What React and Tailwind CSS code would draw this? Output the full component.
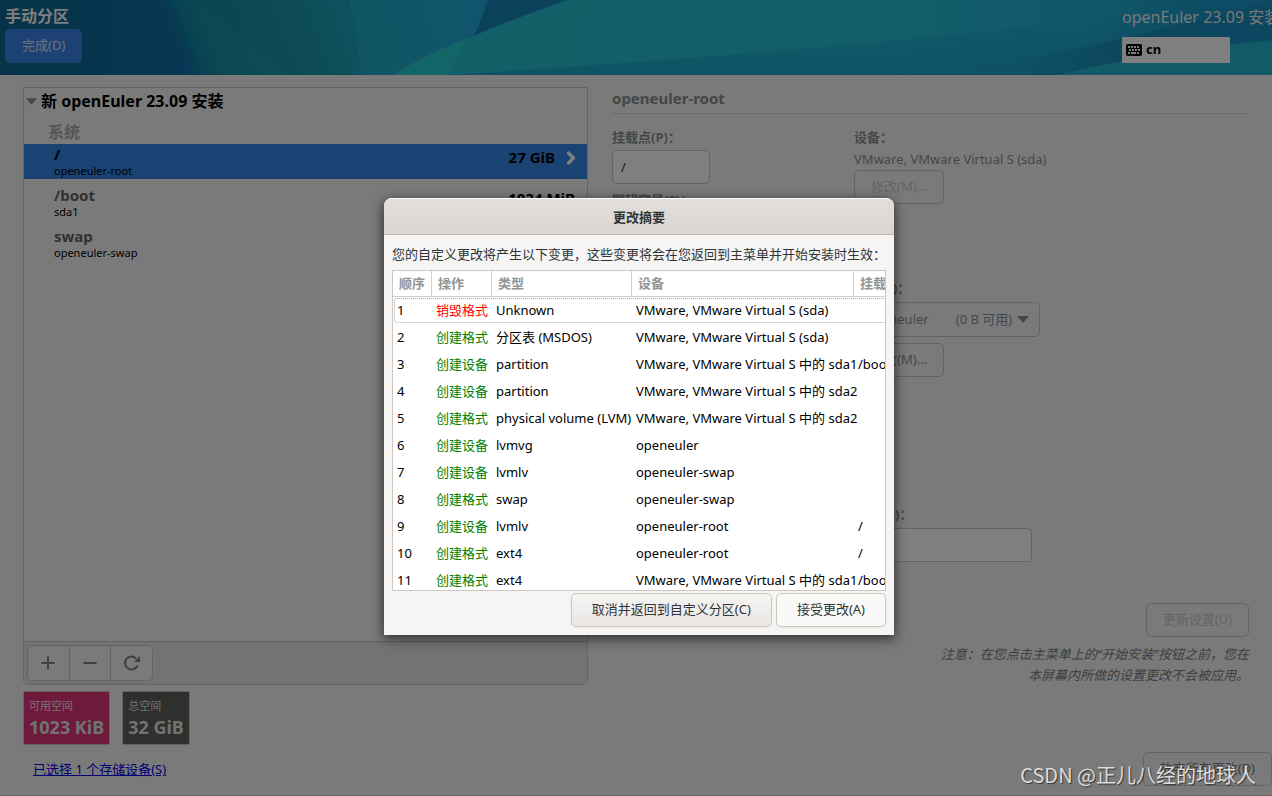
import { ChevronRight, Minus, Plus, RotateCw } from 'lucide-react';

const ACTIONS = [
  { id: 1, action: '销毁格式', destroy: true, type: 'Unknown', device: 'VMware, VMware Virtual S (sda)', mount: '' },
  { id: 2, action: '创建格式', type: '分区表 (MSDOS)', device: 'VMware, VMware Virtual S (sda)', mount: '' },
  { id: 3, action: '创建设备', type: 'partition', device: 'VMware, VMware Virtual S 中的 sda1', mount: '/boot' },
  { id: 4, action: '创建设备', type: 'partition', device: 'VMware, VMware Virtual S 中的 sda2', mount: '' },
  { id: 5, action: '创建格式', type: 'physical volume (LVM)', device: 'VMware, VMware Virtual S 中的 sda2', mount: '' },
  { id: 6, action: '创建设备', type: 'lvmvg', device: 'openeuler', mount: '' },
  { id: 7, action: '创建设备', type: 'lvmlv', device: 'openeuler-swap', mount: '' },
  { id: 8, action: '创建格式', type: 'swap', device: 'openeuler-swap', mount: '' },
  { id: 9, action: '创建设备', type: 'lvmlv', device: 'openeuler-root', mount: '/' },
  { id: 10, action: '创建格式', type: 'ext4', device: 'openeuler-root', mount: '/' },
  { id: 11, action: '创建格式', type: 'ext4', device: 'VMware, VMware Virtual S 中的 sda1', mount: '/boot' },
];

const MOUNTS = [
  { path: '/', name: 'openeuler-root', size: '27 GiB', selected: true },
  { path: '/boot', name: 'sda1', size: '1024 MiB' },
  { path: 'swap', name: 'openeuler-swap', size: '3 GiB' },
];

const Banner = () => (
  <svg className="absolute inset-0 h-full w-full" viewBox="0 0 1272 75" preserveAspectRatio="none" aria-hidden="true">
    <defs>
      {/* slanted, the teal starts further right at the bottom */}
      <linearGradient id="base" x1="0" x2="560" y1="75" y2="-120" gradientUnits="userSpaceOnUse">
        <stop offset="0" stopColor="#086296" />
        <stop offset="0.22" stopColor="#0a6a9a" />
        <stop offset="0.36" stopColor="#1690a8" />
        <stop offset="0.46" stopColor="#1a98b0" />
        <stop offset="0.58" stopColor="#20acc4" />
        <stop offset="0.8" stopColor="#20aad8" />
        <stop offset="1" stopColor="#20aad8" />
      </linearGradient>
      <linearGradient id="dark" x1="0" x2="205" y1="0" y2="0" gradientUnits="userSpaceOnUse">
        <stop offset="0" stopColor="#086690" />
        <stop offset="0.6" stopColor="#0a6a9c" />
        <stop offset="1" stopColor="#0a6cac" />
      </linearGradient>
      <linearGradient id="wave" x1="440" x2="1200" y1="0" y2="75" gradientUnits="userSpaceOnUse">
        <stop offset="0" stopColor="#24c0d0" />
        <stop offset="0.6" stopColor="#24bcd4" />
        <stop offset="0.85" stopColor="#22b0d4" />
        <stop offset="1" stopColor="#1a98c8" />
      </linearGradient>
      <linearGradient id="low" x1="0" x2="0" y1="0" y2="1">
        <stop offset="0" stopColor="#1890c4" stopOpacity="0" />
        <stop offset="1" stopColor="#1890c4" stopOpacity="0.5" />
      </linearGradient>
      <linearGradient id="fold" x1="1000" x2="1250" y1="0" y2="0" gradientUnits="userSpaceOnUse">
        <stop offset="0" stopColor="#1484b8" stopOpacity="0" />
        <stop offset="0.6" stopColor="#1484b8" stopOpacity="0.8" />
        <stop offset="1" stopColor="#1484b8" stopOpacity="0.4" />
      </linearGradient>
      <filter id="soft" x="-20%" y="-50%" width="140%" height="200%">
        <feGaussianBlur stdDeviation="8" />
      </filter>
    </defs>
    <rect width="1272" height="75" fill="url(#base)" />
    <path d="M-30 -30 L152 -30 Q180 30 212 110 L-30 110 Z" fill="url(#dark)" filter="url(#soft)" />
    <path d="M190 0 Q246 34 286 75 L362 75 L350 0 Z" fill="#147c98" opacity="0.2" />
    <path d="M488 0 L566 0 Q520 16 474 36 Q482 18 488 0 Z" fill="#1484b8" />
    <path d="M392 75 Q480 28 572 0 L1272 0 L1272 75 Z" fill="url(#wave)" />
    <path d="M392 75 Q425 55 466 38 Q458 56 446 75 Z" fill="#2ad4d0" opacity="0.6" />
    <path d="M446 75 Q860 50 1272 0 L1272 75 Z" fill="url(#low)" />
    <path d="M940 75 Q1120 44 1272 0 L1272 75 Z" fill="url(#fold)" />
    <path d="M1058 75 Q1150 52 1272 40 L1272 75 Z" fill="#22b4cc" />
  </svg>
);

const KeyboardIcon = () => (
  <svg width="16" height="12" viewBox="0 0 16 12" aria-hidden="true">
    <rect width="16" height="12" rx="2" fill="#000" />
    <path d="M2 3h2M5 3h2M8 3h2M11 3h2M3 6h2M6 6h2M9 6h2M12 6h2M2 9h2M5 9h5M11 9h2" stroke="#fff" strokeWidth="2" />
  </svg>
);

const Triangle = ({ className }) => (
  <svg className={className} width="12" height="7" viewBox="0 0 12 7" aria-hidden="true">
    <path d="M0 0h12L6 7z" fill="currentColor" />
  </svg>
);

const RefreshIcon = () => (
  <svg width="18" height="18" viewBox="0 0 18 18" fill="none" aria-hidden="true">
    <path d="M14.5 11.5A6.5 6.5 0 1 1 13.5 4.8" stroke="currentColor" strokeWidth="2" />
    <path d="M17 2v6h-6l2.5-2L15 4z" fill="currentColor" />
  </svg>
);

const fieldClass = 'block h-[34px] rounded-[5px] border border-[#cdc7c2] bg-white px-2 text-[13px] text-[#2e3436]';
const buttonClass = 'h-[34px] rounded-[5px] border border-[#cdc7c2] px-4 whitespace-nowrap';

const Header = () => (
  <header className="relative flex h-[75px] shrink-0 justify-between overflow-hidden">
    <Banner />
    <div className="relative pt-1 pl-[5px]">
      <h1 className="text-base leading-[25px] font-bold text-white">手动分区</h1>
      <button type="button" className="h-[34px] rounded-[5px] bg-[#3c82e6] px-[17px] text-[#d8e6fa]">
        完成(D)
      </button>
    </div>
    <div className="relative w-[150px] pt-1">
      <div className="text-base leading-[27px] whitespace-nowrap text-[#f0f0f0]">openEuler 23.09 安装</div>
      <button type="button" className="mt-1.5 flex h-[26px] w-[108px] items-center gap-1 bg-white px-1 font-bold text-black">
        <KeyboardIcon />
        cn
      </button>
    </div>
  </header>
);

const MountTree = () => (
  <section className="flex min-h-0 flex-1 flex-col rounded-b-[5px] border border-[#cdc7c2]">
    <div className="flex-1 overflow-hidden">
      <div className="flex h-[26px] items-center gap-1 pl-[2px]">
        <Triangle className="w-[11px] text-[#8b8e8f]" />
        <h2 className="text-base font-bold text-black">新 openEuler 23.09 安装</h2>
      </div>
      <h3 className="flex h-[30px] items-center pt-[5px] pl-6 text-base font-bold text-[#a9abab]">系统</h3>
      <ul>
        {MOUNTS.map((m) => (
          <li
            key={m.path}
            className={
              m.selected
                ? 'mb-[3px] flex h-[35px] items-center bg-[#3584e4] pr-1.5 pl-[30px] text-black'
                : 'flex h-[41px] items-center pr-3 pl-[30px] text-[#606465]'
            }
          >
            <div className="flex-1">
              <div className="text-[15px] leading-[18px] font-bold">{m.path}</div>
              <div className="text-[11px] leading-4 text-black">{m.name}</div>
            </div>
            <div className="pb-2 text-[15px] font-bold text-black">{m.size}</div>
            {m.selected && <ChevronRight className="mb-2 ml-1.5 h-5 w-5 text-white" strokeWidth={4} />}
          </li>
        ))}
      </ul>
    </div>
    <div className="border-t border-[#cdc7c2] bg-[#ebe7e4] px-[3px] py-[3px]">
      <div className="flex h-9 w-[126px] divide-x divide-[#cdc7c2] rounded-[5px] border border-[#cdc7c2] bg-[#f6f5f4] text-[#7c7f80]">
        <button type="button" aria-label="添加" className="flex flex-1 items-center justify-center">
          <Plus className="h-5 w-5" strokeWidth={2.4} />
        </button>
        <button type="button" aria-label="移除" className="flex flex-1 items-center justify-center">
          <Minus className="h-5 w-5" strokeWidth={2.4} />
        </button>
        <button type="button" aria-label="刷新" className="flex flex-1 items-center justify-center">
          <RefreshIcon />
        </button>
      </div>
    </div>
  </section>
);

const DeviceDetails = () => (
  <section className="flex min-h-0 flex-col text-[#8b8e8f]">
    <h2 className="h-[27px] border-b border-[#dcd8d5] text-[15px] leading-[22px] font-bold">openeuler-root</h2>
    <div className="grid grid-cols-[38fr_62fr] pt-[13px]">
      <div>
        <label htmlFor="mount" className="block h-[23px] leading-[21px] font-bold">挂载点(P)：</label>
        <input id="mount" defaultValue="/" className={`${fieldClass} w-[98px]`} />
        <label htmlFor="capacity" className="mt-[7px] block h-6 font-bold">期望容量(S)：</label>
        <input id="capacity" defaultValue="27 GiB" className={`${fieldClass} w-[98px]`} />
      </div>
      <div>
        <div className="h-5 leading-[21px] font-bold">设备：</div>
        <p className="h-[23px] leading-6">VMware, VMware Virtual S (sda)</p>
        <button type="button" disabled className={`${buttonClass} text-[#c8c8c6]`}>修改(M)...</button>

        <label htmlFor="group" className="mt-[75px] block h-[23px] font-bold">卷组(V)：</label>
        <div className="relative w-[186px]">
          <select
            id="group"
            className="h-[35px] w-full appearance-none rounded-[5px] border border-[#cdc7c2] bg-[#f6f5f4] px-[11px]"
          >
            <option>openeuler{'\u00a0'.repeat(8)}(0 B 可用)</option>
          </select>
          <Triangle className="pointer-events-none absolute top-[14px] right-[11px]" />
        </div>
        <button type="button" className={`${buttonClass} mt-1.5`}>修改(M)...</button>

        <label htmlFor="name" className="mt-[128px] block h-[23px] font-bold">名称(N)：</label>
        <input id="name" defaultValue="root" className={`${fieldClass} w-[178px]`} />
      </div>
    </div>
    <div className="mt-[41px] flex flex-col items-end">
      <button type="button" disabled className={`${buttonClass} text-[#c8c8c6]`}>更新设置(U)</button>
      <p className="mt-[7px] w-[320px] text-right leading-[21px] text-[#7c7f80] italic">
        注意：在您点击主菜单上的“开始安装”按钮之前，您在本屏幕内所做的设置更改不会被应用。
      </p>
    </div>
  </section>
);

const StorageBox = ({ label, value, className }) => (
  <div className={`h-[54px] border border-[#cdc7c2] px-[5px] pt-1 text-[#e4e4e4] ${className}`}>
    <div className="text-[11px] leading-5">{label}</div>
    <div className="text-[18px] leading-[22px] font-bold">{value}</div>
  </div>
);

const SummaryDialog = () => (
  <div
    role="dialog"
    aria-labelledby="summary-title"
    className="w-[510px] overflow-hidden rounded-t-lg bg-[#f6f5f4] text-[#2e3436] shadow-[0_3px_12px_1px_rgba(0,0,0,0.6)]"
  >
    <h2
      id="summary-title"
      className="h-[37px] border-t border-b border-t-white border-b-[#bfb8b1] bg-linear-to-b from-[#e1dedb] to-[#dad6d2] text-center leading-9 font-bold"
    >
      更改摘要
    </h2>
    <div className="px-2 pb-2">
      <p className="pt-2 pb-1 leading-[23px] whitespace-nowrap">
        您的自定义更改将产生以下变更，这些变更将会在您返回到主菜单并开始安装时生效：
      </p>
      <div className="h-[321px] overflow-hidden border border-[#cdc7c2] bg-white">
        <table className="w-[530px] table-fixed border-separate border-spacing-0 text-black">
          <thead>
            <tr className="h-[26px] text-left text-[#929595] [&>th]:border-r [&>th]:border-b [&>th]:border-[#d5d0cc] [&>th]:px-1.5 [&>th]:pt-0.5 [&>th]:pb-0 [&>th]:font-bold">
              <th className="w-[39px]">顺序</th>
              <th className="w-[60px]">操作</th>
              <th className="w-[140px]">类型</th>
              <th className="w-[222px]">设备</th>
              <th>挂载点</th>
            </tr>
          </thead>
          <tbody>
            {ACTIONS.map((a) => (
              <tr
                key={a.id}
                className="h-[27px] whitespace-nowrap first:rounded-sm first:outline first:-outline-offset-2 first:outline-[#a8a8a8] first:outline-dotted [&>td]:px-1 [&>td]:pt-0.5 [&>td]:pb-0"
              >
                <td>{a.id}</td>
                <td className={a.destroy ? 'text-[#ff0000]' : 'text-[#008000]'}>{a.action}</td>
                <td>{a.type}</td>
                <td>{a.device}</td>
                <td>{a.mount}</td>
              </tr>
            ))}
          </tbody>
        </table>
      </div>
      <div className="mt-0.5 flex justify-end gap-1">
        <button type="button" className="h-[34px] rounded-[5px] border border-[#cdc7c2] bg-linear-to-b from-[#f6f5f4] to-[#e9e6e4] px-5 shadow-xs">
          取消并返回到自定义分区(C)
        </button>
        <button type="button" className="h-[34px] rounded-[5px] border border-[#cdc7c2] bg-[#f9f9f8] px-5 shadow-xs">
          接受更改(A)
        </button>
      </div>
    </div>
  </div>
);

const App = () => (
  <div className="relative flex h-screen min-h-[700px] flex-col overflow-hidden bg-[#f6f5f4] font-['Noto_Sans','Noto_Sans_CJK_SC',sans-serif] text-[13px]">
    <Header />
    <main className="grid min-h-0 flex-1 grid-cols-[565fr_637fr] gap-6 px-[23px] pt-3">
      <div className="flex min-h-0 flex-col">
        <MountTree />
        <div className="mt-1.5 flex gap-3">
          <StorageBox label="可用空间" value="1023 KiB" className="bg-[#de3279]" />
          <StorageBox label="总空间" value="32 GiB" className="bg-[#5e5e5c]" />
        </div>
      </div>
      <DeviceDetails />
    </main>
    <footer className="flex h-[51px] shrink-0 items-center justify-between border-b border-[#cdc7c2] pl-[33px]">
      <a href="#storage" className="text-[#0000ee] underline">已选择 1 个存储设备(S)</a>
      <button type="button" className={`${buttonClass} mt-[-3px] text-[#7c7f80]`}>放弃所有更改(D)</button>
    </footer>

    {/* Modal layer */}
    <div className="absolute inset-0 flex items-center justify-center bg-black/50 pt-9 pl-1.5">
      <SummaryDialog />
    </div>
    <div className="absolute right-4 bottom-1.5 font-['Noto_Sans_CJK_SC',sans-serif] text-[20px] text-[#dcdcdc] [text-shadow:1px_1px_1px_#333]">
      CSDN @正儿八经的地球人
    </div>
  </div>
);

export default App;
